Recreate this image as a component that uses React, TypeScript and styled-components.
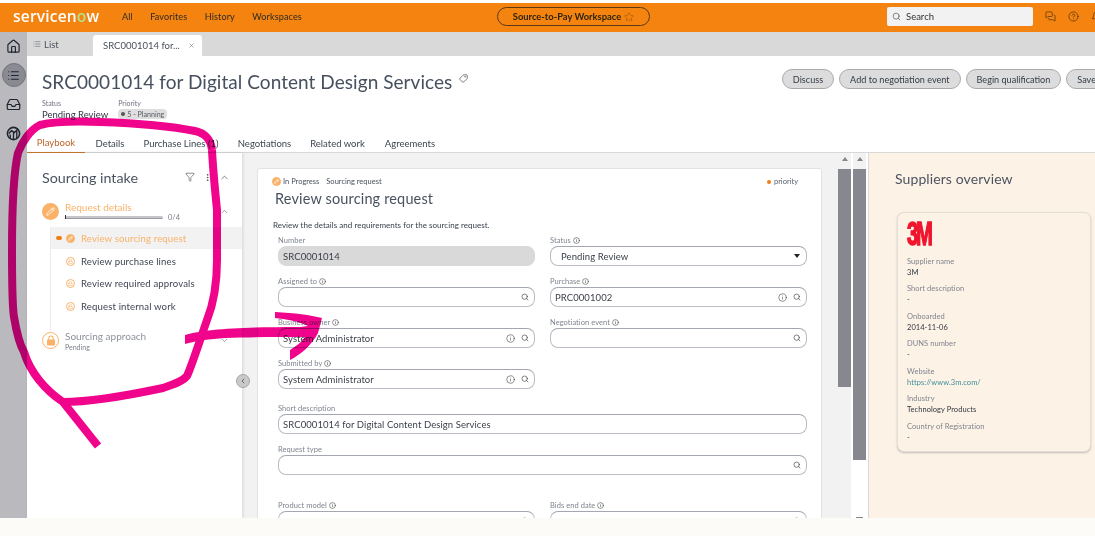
import React from "react";
import styled, { createGlobalStyle } from "styled-components";
import {
  Home, List, Inbox, Search, Star, Tag, X, Filter, MoreVertical, ChevronUp, ChevronDown, ChevronLeft,
  Pencil, Lock, Info, MessagesSquare, CircleHelp, Bell,
} from "lucide-react";

const Global = createGlobalStyle`
  html, body { margin: 0; padding: 0; background: #fdfbf8; overflow: hidden; }
  body { font-family: "Lato", "Liberation Sans", sans-serif; color: #2e3440; }
  * { box-sizing: border-box; }
`;

const Page = styled.div`
  position: relative; width: 1095px; height: 536px; overflow: hidden; background: #fdfbf8;
  display: flex; flex-direction: column;
`;
const Frame = styled.div`
  height: 518px; display: flex; flex-direction: column; padding-top: 3px; background: #fff; overflow: hidden;
`;
const Header = styled.header`
  height: 29px; flex: none; background: #f4840f; display: grid; grid-template-columns: 497px 153px 1fr; align-items: center; padding-bottom: 2px;
`;
const HeaderLeft = styled.div`display: flex; align-items: center; padding-left: 13px;`;
const Logo = styled.div`
  width: 109px; color: #fff; font: 600 15.5px "Open Sans", sans-serif; letter-spacing: .2px; line-height: 1;
  span { color: #b4e08a; }
`;
const NavItem = styled.span`font-size: 9.1px; color: #2d2a24; margin-right: 17.5px; letter-spacing: .1px;`;
const WorkspacePill = styled.div`
  height: 19px; border: 1px solid #5c3a12; border-radius: 10px; display: flex; align-items: center; justify-content: center; gap: 3px;
  font-size: 9.4px; font-weight: 700; color: #2d2410; white-space: nowrap;
`;
const HeaderRight = styled.div`display: flex; align-items: center; padding-left: 237px; gap: 12px;`;
const SearchBox = styled.div`
  width: 146px; height: 19px; background: #f2f2f2; border-radius: 2px; display: flex; align-items: center; gap: 5px; padding-left: 5px;
  font-size: 9.5px; color: #333;
`;
const Body = styled.div`flex: 1; min-height: 0; display: flex;`;
const Rail = styled.nav`
  width: 27px; flex: none; background: #b9b9be; display: flex; flex-direction: column; align-items: center; gap: 5px; padding-top: 2px;
`;
const RailBtn = styled.div<{ $active?: boolean }>`
  width: 24px; height: 24px; border-radius: 50%; display: flex; align-items: center; justify-content: center; color: #1f2530;
  background: ${p => (p.$active ? "#8a8b92" : "transparent")};
  border: ${p => (p.$active ? "1px solid #75767c" : "none")};
`;
const Main = styled.div`flex: 1; min-width: 0; display: flex; flex-direction: column; background: #fff;`;
const TabStrip = styled.div`
  height: 24px; flex: none; background: #d9d9d9; display: flex; align-items: flex-end; font-size: 9.5px; color: #4c5360;
`;
const ListTab = styled.div`width: 66px; height: 24px; padding-left: 6px; display: flex; align-items: center; gap: 3px;`;
const RecordTab = styled.div`
  width: 109px; height: 21px; background: #fff; border-radius: 3px 3px 0 0; display: flex; align-items: center; justify-content: space-between; padding: 0 7px 0 10px; color: #48505c;
`;
const TitleArea = styled.div`height: 77px; flex: none; padding: 12px 0 0 15px; position: relative; overflow: hidden;`;
const TitleRow = styled.div`display: flex; align-items: flex-start; justify-content: space-between; height: 32px; white-space: nowrap;`;
const TitleGroup = styled.div`display: flex; align-items: flex-start; gap: 7px;`;
const Title = styled.h1`margin: 0; font-size: 19px; line-height: 27px; font-weight: 400; color: #47505e; letter-spacing: .05px;`;
const Actions = styled.div`display: flex; gap: 5px; margin-right: -12px; padding-top: 1px;`;
const ActionBtn = styled.button`
  height: 20px; border: 1px solid #a9aaae; border-radius: 10px; background: #dcdcdc; font: 400 9.1px "Lato", sans-serif; color: #333b46; padding: 0 10px; white-space: nowrap;
`;
const MetaRow = styled.div`display: flex; gap: 10px; margin-top: -1px;`;
const MetaCol = styled.div`display: flex; flex-direction: column; gap: 2px; align-items: flex-start;`;
const MetaLabel = styled.span`font-size: 7px; color: #6e7480;`;
const MetaValue = styled.span`font-size: 9.5px; color: #2f3642;`;
const PriorityChip = styled.span`
  font-size: 7.1px; background: #dedede; border-radius: 4px; padding: 1px 3px; color: #555b64; display: inline-flex; align-items: center; gap: 2px; height: 10px; white-space: nowrap;
  &::before { content: ""; width: 4px; height: 4px; border-radius: 50%; background: #555; }
`;
const Tabs = styled.div`
  height: 20px; flex: none; display: flex; border-bottom: 1px solid #d8d8d8; font-size: 9.5px; color: #3d4450; align-items: stretch;
`;
const TabItem = styled.div<{ $active?: boolean; $w: number }>`
  width: ${p => p.$w}px; display: flex; align-items: center; justify-content: center; white-space: nowrap;
  color: ${p => (p.$active ? "#b9662a" : "#3d4450")};
  border-bottom: ${p => (p.$active ? "1px solid #c97a32" : "none")}; height: 20px;
`;
const Content = styled.div`flex: 1; min-height: 0; display: flex;`;
const SidePanel = styled.aside`
  width: 215px; flex: none; background: #fff; padding: 15px 0 0 0; position: relative; box-shadow: 1px 0 3px rgba(0,0,0,.12);
`;
const SideHead = styled.div`display: flex; align-items: center; padding: 0 12px 0 15px; height: 18px; color: #3a414d;`;
const SideTitle = styled.h2`margin: 0; flex: 1; font-size: 14.3px; font-weight: 400; color: #4c5462;`;
const Stage = styled.div`display: flex; padding: 0 0 0 15px; height: 32px; margin-top: 15px; position: relative;`;
const StageIcon = styled.div<{ $outline?: boolean }>`
  width: 17px; height: 17px; border-radius: 50%; flex: none; margin-top: 2px; display: flex; align-items: center; justify-content: center;
  background: ${p => (p.$outline ? "#fff" : "#f9b268")}; border: ${p => (p.$outline ? "1px solid #f9b268" : "none")};
  color: ${p => (p.$outline ? "#f9b268" : "#fff")};
`;
const StageInfo = styled.div`margin-left: 6px; flex: 1; display: flex; flex-direction: column;`;
const StageName = styled.span<{ $muted?: boolean }>`
  font-size: 10px; line-height: 12px; color: ${p => (p.$muted ? "#8d929b" : "#f9b268")};
`;
const ProgressRow = styled.div`display: flex; align-items: center; gap: 5px; font-size: 7.5px; color: #7b808a; height: 10px; margin-top: -1px;`;
const ProgressTrack = styled.div`
  width: 98px; height: 3px; background: #c5c5cc; border-radius: 2px; position: relative; border-bottom: 1px solid #9b9ba3;
  &::before { content: ""; position: absolute; left: 0; top: -1px; width: 1px; height: 4px; background: #333; }
`;
const StageSub = styled.span`font-size: 7px; color: #7b808a; line-height: 10px;`;
const StageChevron = styled.div`width: 15px; margin-right: 7px; color: #565c66; padding-top: 6px; display: flex;`;
const Steps = styled.div`margin-left: 23px; border-left: 1px solid #ececec; margin-top: -6px; height: 107px; padding-top: 0;`;
const StepRow = styled.div<{ $active?: boolean }>`
  height: 22px; margin-bottom: ${p => (p.$active ? "1px" : "0.7px")}; display: flex; align-items: center; position: relative; padding-left: 15px; gap: 6px;
  background: ${p => (p.$active ? "#f2f2f2" : "transparent")};
  color: ${p => (p.$active ? "#f9b268" : "#3f4652")};
  font-size: 9.6px; letter-spacing: .13px; white-space: nowrap;
`;
const StepMarker = styled.span`
  position: absolute; left: 5px; top: 9px; width: 6px; height: 4px; border-radius: 2px; background: #ee7f14;
`;
const StepIcon = styled.span<{ $filled?: boolean }>`
  width: 9px; height: 9px; border-radius: 50%; flex: none; display: inline-flex; align-items: center; justify-content: center;
  background: ${p => (p.$filled ? "#f9b268" : "#fff")}; border: 1px solid #f9b268; color: ${p => (p.$filled ? "#fff" : "#f9b268")};
`;
const Stage2 = styled(Stage)`margin-top: -4px;`;
const Collapse = styled.div`
  position: absolute; right: -8px; top: 221px; width: 14px; height: 14px; border-radius: 50%; background: #c9c9c9; border: 1px solid #a5a5a8;
  display: flex; align-items: center; justify-content: center; color: #333;
`;
const Gutter = styled.div`flex: 1; min-width: 0; background: #f2f2f2; display: flex; padding: 15px 0 0 15px;`;
const Card = styled.section`
  width: 565px; height: 420px; flex: none; background: #fff; border: 1px solid #e2e2e4; border-radius: 3px; padding: 8px 15px 0; position: relative;
`;
const CardTop = styled.div`display: flex; justify-content: space-between; align-items: center; font-size: 7.5px; color: #596070; height: 9px; padding-right: 8px;`;
const CardCrumbs = styled.div`display: flex; align-items: center; gap: 7px; margin-left: -1px;`;
const Crumb = styled.span`display: inline-flex; align-items: center; gap: 2px; color: #49505c;`;
const PriorityTag = styled.span`
  display: inline-flex; align-items: center; gap: 3px;
  &::before { content: ""; width: 4px; height: 4px; border-radius: 50%; background: #ee7f14; }
`;
const CardTitle = styled.h3`margin: 4px 0 0 2px; font-size: 14.5px; line-height: 18px; font-weight: 400; color: #4a5260; letter-spacing: .15px;`;
const Lead = styled.p`margin: 12px 0 0; font-size: 8px; line-height: 11px; color: #39404c; letter-spacing: .03px;`;
const FormGrid = styled.div`
  display: grid; grid-template-columns: 257px 257px; column-gap: 15px; margin: 4px 0 0 5px;
`;
const Field = styled.div<{ $full?: boolean; $mt?: number }>`
  height: 41px; grid-column: ${p => (p.$full ? "1 / -1" : "auto")};
  margin-top: ${p => p.$mt || 0}px;
  display: flex; flex-direction: column;
`;
const FieldLabel = styled.label`
  font-size: 7.5px; line-height: 10px; height: 11px; color: #7f848e; display: flex; align-items: center; gap: 2px; letter-spacing: .05px;
`;
const InputBox = styled.div<{ $read?: boolean; $half?: boolean }>`
  height: 20px; flex: none; border-radius: 8px; display: flex; align-items: center; padding: 0 5px 0 4px; gap: 6px;
  width: ${p => (p.$half ? "257px" : "auto")};
  font-size: 9.5px; color: #3a3f48; letter-spacing: .08px;
  background: ${p => (p.$read ? "#d9d9d9" : "#fff")};
  border: ${p => (p.$read ? "1px solid #d9d9d9" : "1px solid #b9bcc4")};
  border-top-color: ${p => (p.$read ? "#d9d9d9" : "#a3a7b0")};
`;
const InputText = styled.span<{ $indent?: boolean; $ghost?: boolean }>`
  flex: 1; white-space: nowrap; padding-left: ${p => (p.$indent ? "6px" : "0")}; color: ${p => (p.$ghost ? "#8d9099" : "inherit")};
`;
const Caret = styled.span`width: 0; height: 0; border: 3px solid transparent; border-top: 4px solid #222; margin: 3px 1px 0 0;`;
const Scrolls = styled.div`width: 30px; flex: none; display: flex; gap: 2px; margin: -15px 0 0 16px; background: #fff; height: calc(100% + 15px);`;
const Track = styled.div`width: 13px; height: 100%; position: relative; background: #f2f2f2;`;
const Track2 = styled(Track)`background: #fff;`;
const Arrow = styled.div`
  height: 16px; display: flex; align-items: center; justify-content: center; padding-bottom: 4px; background: #f2f2f2;
  &::before { content: ""; border: 3px solid transparent; border-bottom: 4px solid #85858c; margin-bottom: 3px; }
`;
const Thumb = styled.div<{ $h: number }>`height: ${p => p.$h}px; background: #87878f;`;
const DownMark = styled.div`position: absolute; bottom: 0; left: 3px; width: 7px; height: 1px; background: #85858c;`;
const Right = styled.aside`
  width: 227px; flex: none; background: #fdf2e6; border-left: 1px solid #d9d9d9; padding: 18px 0 0 26px;
`;
const RightTitle = styled.h2`margin: 0; font-size: 14px; line-height: 16px; font-weight: 400; color: #4c5462; letter-spacing: .1px;`;
const SupplierCard = styled.div`
  width: 194px; height: 240px; margin: 25px 0 0 2px; border: 1px solid #e5dfd9; border-radius: 7px; padding: 9px 9px 0; background: #fdf2e6;
  box-shadow: 0 1px 2px rgba(90,90,90,.35);
`;
const LogoMark = styled.div`
  height: 28px; color: #f0142d; font: 900 22px/26px "Liberation Sans", sans-serif; letter-spacing: -2.5px; transform-origin: left center;
  transform: scale(.92, 1.5); -webkit-text-stroke: 1px #f0142d;
`;
const InfoLabel = styled.div`font-size: 7.5px; line-height: 10px; color: #7f8590; margin-top: 6.5px; letter-spacing: .05px;`;
const InfoValue = styled.div<{ $link?: boolean }>`
  font-size: 7.5px; line-height: 11px; color: ${p => (p.$link ? "#3f8f9c" : "#2f3642")}; letter-spacing: .05px;
`;
const Overlay = styled.svg`position: absolute; inset: 0; pointer-events: none; mix-blend-mode: multiply;`;

const I = () => <Info size={7} strokeWidth={1.8} color="#333" />;
const S = () => <Search size={8} strokeWidth={2} color="#444" />;
const InfoI = () => <Info size={9} strokeWidth={1.6} color="#444" />;
const LockGlyph = () => (
  <svg width="10" height="11" viewBox="0 0 10 11" fill="none">
    <path d="M2.8 5V3.2a2.2 2.2 0 0 1 4.4 0V5" stroke="#f9b268" strokeWidth="1.1" />
    <rect x="1" y="4.6" width="8" height="6" rx=".6" fill="#f9b268" />
  </svg>
);

const info: [string, string, boolean?][] = [
  ["Supplier name", "3M"],
  ["Short description", "-"],
  ["Onboarded", "2014-11-06"],
  ["DUNS number", "-"],
  ["Website", "https://www.3m.com/", true],
  ["Industry", "Technology Products"],
  ["Country of Registration", "-"],
];

export default function App() {
  return (
    <Page>
      <Global />
      <Frame>
        <Header>
          <HeaderLeft>
            <Logo>servicen<span>o</span>w</Logo>
            <NavItem>All</NavItem>
            <NavItem>Favorites</NavItem>
            <NavItem>History</NavItem>
            <NavItem>Workspaces</NavItem>
          </HeaderLeft>
          <WorkspacePill>Source-to-Pay Workspace <Star size={10} strokeWidth={1} color="#7a4a10" /></WorkspacePill>
          <HeaderRight>
            <SearchBox><Search size={9} strokeWidth={1.5} />Search</SearchBox>
            <MessagesSquare size={11} strokeWidth={1.4} color="#3a2a10" />
            <CircleHelp size={11} strokeWidth={1.4} color="#3a2a10" />
            <Bell size={11} strokeWidth={1.4} color="#3a2a10" />
          </HeaderRight>
        </Header>
        <Body>
          <Rail>
            <RailBtn><Home size={15} strokeWidth={1.9} /></RailBtn>
            <RailBtn $active><List size={13} strokeWidth={2} /></RailBtn>
            <RailBtn><Inbox size={15} strokeWidth={1.9} /></RailBtn>
            <RailBtn>
              <svg width="15" height="15" viewBox="0 0 16 16" fill="none" stroke="#1f2530" strokeWidth="1.7">
                <circle cx="8" cy="8" r="6.5" />
                <path d="M4.5 13V9M8 14V7M11.5 13V5M3 8l3-3 3 2 4-4" strokeWidth="1.4" />
              </svg>
            </RailBtn>
          </Rail>
          <Main>
            <TabStrip>
              <ListTab><List size={8} strokeWidth={1.5} />List</ListTab>
              <RecordTab>SRC0001014 for... <X size={7} strokeWidth={1.5} /></RecordTab>
            </TabStrip>
            <TitleArea>
              <TitleRow>
                <TitleGroup>
                  <Title>SRC0001014 for Digital Content Design Services</Title>
                  <Tag size={9} strokeWidth={1.7} color="#333" style={{ marginTop: 6, transform: "scaleX(-1)" }} />
                </TitleGroup>
                <Actions>
                  <ActionBtn>Discuss</ActionBtn>
                  <ActionBtn>Add to negotiation event</ActionBtn>
                  <ActionBtn>Begin qualification</ActionBtn>
                  <ActionBtn>Save</ActionBtn>
                </Actions>
              </TitleRow>
              <MetaRow>
                <MetaCol>
                  <MetaLabel>Status</MetaLabel>
                  <MetaValue>Pending Review</MetaValue>
                </MetaCol>
                <MetaCol>
                  <MetaLabel>Priority</MetaLabel>
                  <PriorityChip>5 - Planning</PriorityChip>
                </MetaCol>
              </MetaRow>
            </TitleArea>
            <Tabs>
              <TabItem $active $w={58}>Playbook</TabItem>
              <TabItem $w={50}>Details</TabItem>
              <TabItem $w={92}>Purchase Lines (1)</TabItem>
              <TabItem $w={75}>Negotiations</TabItem>
              <TabItem $w={71}>Related work</TabItem>
              <TabItem $w={74}>Agreements</TabItem>
            </Tabs>
            <Content>
              <SidePanel>
                <SideHead>
                  <SideTitle>Sourcing intake</SideTitle>
                  <Filter size={10} strokeWidth={1.4} />
                  <MoreVertical size={9} strokeWidth={2} style={{ marginLeft: 8 }} />
                  <ChevronUp size={11} strokeWidth={1.4} style={{ marginLeft: 7 }} />
                </SideHead>
                <Stage>
                  <StageIcon><Pencil size={9} strokeWidth={2.2} /></StageIcon>
                  <StageInfo>
                    <StageName>Request details</StageName>
                    <ProgressRow><ProgressTrack />0/4</ProgressRow>
                  </StageInfo>
                  <StageChevron><ChevronUp size={9} strokeWidth={1.5} /></StageChevron>
                </Stage>
                <Steps>
                  <StepRow $active>
                    <StepMarker />
                    <StepIcon $filled><Pencil size={5} strokeWidth={3} /></StepIcon>Review sourcing request
                  </StepRow>
                  <StepRow><StepIcon><Lock size={5} strokeWidth={2.5} /></StepIcon>Review purchase lines</StepRow>
                  <StepRow><StepIcon><Lock size={5} strokeWidth={2.5} /></StepIcon>Review required approvals</StepRow>
                  <StepRow><StepIcon><Lock size={5} strokeWidth={2.5} /></StepIcon>Request internal work</StepRow>
                </Steps>
                <Stage2>
                  <StageIcon $outline><LockGlyph /></StageIcon>
                  <StageInfo>
                    <StageName $muted>Sourcing approach</StageName>
                    <StageSub>Pending</StageSub>
                  </StageInfo>
                  <StageChevron><ChevronDown size={9} strokeWidth={1.5} /></StageChevron>
                </Stage2>
                <Collapse><ChevronLeft size={8} strokeWidth={2} /></Collapse>
              </SidePanel>
              <Gutter>
                <Card>
                  <CardTop>
                    <CardCrumbs>
                      <Crumb><StepIcon $filled><Pencil size={5} strokeWidth={3} /></StepIcon>In Progress</Crumb>
                      <Crumb>Sourcing request</Crumb>
                    </CardCrumbs>
                    <PriorityTag>priority</PriorityTag>
                  </CardTop>
                  <CardTitle>Review sourcing request</CardTitle>
                  <Lead>Review the details and requirements for the sourcing request.</Lead>
                  <FormGrid>
                    <Field>
                      <FieldLabel>Number</FieldLabel>
                      <InputBox $read><InputText>SRC0001014</InputText></InputBox>
                    </Field>
                    <Field>
                      <FieldLabel>Status <I /></FieldLabel>
                      <InputBox><InputText $indent>Pending Review</InputText><Caret /></InputBox>
                    </Field>
                    <Field>
                      <FieldLabel>Assigned to <I /></FieldLabel>
                      <InputBox><InputText /><S /></InputBox>
                    </Field>
                    <Field>
                      <FieldLabel>Purchase <I /></FieldLabel>
                      <InputBox><InputText>PRC0001002</InputText><InfoI /><S /></InputBox>
                    </Field>
                    <Field>
                      <FieldLabel>Business owner <I /></FieldLabel>
                      <InputBox><InputText>System Administrator</InputText><InfoI /><S /></InputBox>
                    </Field>
                    <Field>
                      <FieldLabel>Negotiation event <I /></FieldLabel>
                      <InputBox><InputText /><S /></InputBox>
                    </Field>
                    <Field $full>
                      <FieldLabel>Submitted by <I /></FieldLabel>
                      <InputBox $half><InputText>System Administrator</InputText><InfoI /><S /></InputBox>
                    </Field>
                    <Field $full $mt={4}>
                      <FieldLabel>Short description</FieldLabel>
                      <InputBox><InputText>SRC0001014 for Digital Content Design Services</InputText></InputBox>
                    </Field>
                    <Field $full>
                      <FieldLabel>Request type</FieldLabel>
                      <InputBox><InputText /><S /></InputBox>
                    </Field>
                    <Field $mt={15}>
                      <FieldLabel>Product model <I /></FieldLabel>
                      <InputBox><InputText /><S /></InputBox>
                    </Field>
                    <Field $mt={15}>
                      <FieldLabel>Bids end date <I /></FieldLabel>
                      <InputBox><InputText $ghost>YYYY-MM-DD</InputText><S /></InputBox>
                    </Field>
                  </FormGrid>
                </Card>
                <Scrolls>
                  <Track><Arrow /><Thumb $h={218} /></Track>
                  <Track2><Arrow /><Thumb $h={291} /><DownMark /></Track2>
                </Scrolls>
              </Gutter>
              <Right>
                <RightTitle>Suppliers overview</RightTitle>
                <SupplierCard>
                  <LogoMark>3M</LogoMark>
                  {info.map(([k, v, link]) => (
                    <React.Fragment key={k}>
                      <InfoLabel>{k}</InfoLabel>
                      <InfoValue $link={link}>{v}</InfoValue>
                    </React.Fragment>
                  ))}
                </SupplierCard>
              </Right>
            </Content>
          </Main>
        </Body>
      </Frame>
      <Overlay width="1095" height="536" viewBox="0 0 1095 536" fill="none">
        <path
          d="M212 150 C211 140 205 133 195 131 C170 126 130 123 100 122 C75 121 52 122 40 125 C30 130 22 142 18 153 C13 175 12 215 12 250 C12 285 12 305 14 317 C17 335 20 345 24 352 C30 372 45 390 63 402 L98 446"
          stroke="#f0048c" strokeWidth="8" strokeLinejoin="round"
        />
        <path
          d="M63 402 C90 402 130 395 163 388 C175 384 183 381 187 376 C192 365 200 340 207 320 C215 300 217 280 217 260 C217 230 217 215 217 210 C215 190 213 170 212 150"
          stroke="#f0048c" strokeWidth="8" strokeLinejoin="round"
        />
        <path
          d="M185 335 C205 329 240 327 300 327 L308 326 C298 321 285 319 275 318 L275 312 C295 313 310 315 322 318 L318 333 C312 345 300 355 290 360 L290 350 C296 346 302 342 305 337 C280 337 250 337 225 338 C210 339 195 341 185 344 Z"
          fill="#f0048c"
        />
      </Overlay>
    </Page>
  );
}
